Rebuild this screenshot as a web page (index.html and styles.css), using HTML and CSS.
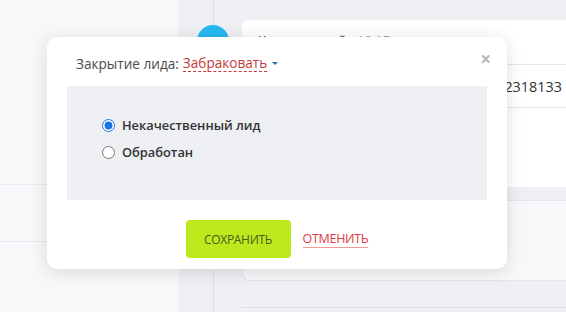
FILE: index.html
```html
<!DOCTYPE html>
<html lang="ru">
<head>
<meta charset="utf-8">
<title>Закрытие лида</title>
<link rel="stylesheet" href="styles.css">
</head>
<body>
<div class="page">
  <aside class="sidebar">
    <div class="side-block side-top"></div>
    <div class="side-block side-mid"></div>
    <div class="side-block"></div>
  </aside>
  <main class="feed">
    <div class="timeline">
      <div class="dot"></div>
    </div>
    <div class="cards">
      <div class="card">
        <div class="card-head"><span class="author">Комментарий</span><span class="time">10:15</span></div>
        <div class="card-row">+7 9052318133</div>
        <div class="card-rest"></div>
      </div>
      <div class="card2"></div>
    </div>
  </main>
</div>

<div class="modal">
  <div class="modal-head">
    <span class="modal-title">Закрытие лида:</span>
    <span class="status">Забраковать</span>
    <span class="caret"></span>
    <span class="close">&#215;</span>
  </div>
  <div class="options">
    <label class="opt"><input type="radio" name="r" checked> <span>Некачественный лид</span></label>
    <label class="opt"><input type="radio" name="r"> <span>Обработан</span></label>
  </div>
  <div class="actions">
    <button class="save">СОХРАНИТЬ</button>
    <a class="cancel" href="#">ОТМЕНИТЬ</a>
  </div>
</div>
</body>
</html>
```

FILE: styles.css
```css
* { box-sizing: border-box; }
html, body { margin: 0; padding: 0; }
body {
  width: 566px;
  height: 312px;
  overflow: hidden;
  font-family: "Open Sans", "Noto Sans", sans-serif;
  background: #eef0f3;
  position: relative;
}
.page {
  display: flex;
  height: 312px;
}
.sidebar {
  width: 178px;
  flex: none;
  background: #f7f8fa;
  box-shadow: 1px 0 3px rgba(0,0,0,0.04);
  display: flex;
  flex-direction: column;
}
.side-top { height: 185px; border-bottom: 1px solid #e6e9ed; }
.side-mid { height: 57px; border-bottom: 1px solid #e6e9ed; }
.feed {
  flex: 1;
  display: flex;
  background: #eef0f3;
}
.timeline {
  width: 64px;
  flex: none;
  background: linear-gradient(#dde1e6, #dde1e6) no-repeat 35px 0 / 1px 100%;
}
.dot {
  width: 32px;
  height: 32px;
  border-radius: 50%;
  background: #27b8ef;
  margin: 25px 0 0 19px;
}
.cards {
  flex: 1;
  display: flex;
  flex-direction: column;
  border-bottom: 1px solid #dde1e6;
  height: 308px;
}
.card {
  margin-top: 20px;
  height: 167px;
  background: #fff;
  border-radius: 7px 0 0 0;
  display: flex;
  flex-direction: column;
}
.card-head {
  height: 45px;
  padding: 11px 0 0 16px;
  font-size: 13px;
  color: #333;
  border-bottom: 1px solid #e3e6ea;
  display: flex;
}
.card-head .author { width: 99px; }
.card-head .time { color: #999; }
.card-row {
  height: 43px;
  border-bottom: 1px solid #e3e6ea;
  display: flex;
  align-items: center;
  justify-content: flex-end;
  padding-right: 4px;
  font-size: 14.4px;
  color: #333;
}
.card2 {
  margin-top: 13px;
  height: 81px;
  background: #f7f8fa;
  border: 1px solid #e3e6ea;
  border-right: none;
  border-radius: 0 0 0 8px;
}

.modal {
  position: absolute;
  left: 47px;
  top: 37px;
  width: 460px;
  height: 232px;
  background: #fff;
  border-radius: 10px;
  box-shadow: 0 3px 18px rgba(0,0,0,0.13);
  padding: 0 20px;
}
.modal-head {
  height: 49px;
  display: flex;
  align-items: center;
  padding: 4px 0 0 9px;
  font-size: 13.6px;
  color: #4a4a4a;
  position: relative;
}
.modal-title { margin-right: 4px; }
.status {
  color: #c6393a;
  border-bottom: 1px dashed #c6393a;
  line-height: 16px;
}
.caret {
  width: 0;
  height: 0;
  border-left: 3px solid transparent;
  border-right: 3px solid transparent;
  border-top: 3px solid #2f6aa3;
  margin-left: 5px;
}
.close {
  position: absolute;
  right: -4px;
  top: 13px;
  font-size: 19px;
  font-weight: bold;
  color: #b8b8b8;
  line-height: 1;
}
.options {
  height: 114px;
  background: #eef0f3;
  padding: 29px 0 0 35px;
  display: flex;
  flex-direction: column;
  gap: 7px;
}
.opt {
  display: flex;
  align-items: center;
  font-family: "Open Sans", sans-serif;
  font-weight: 600;
  font-size: 12.8px;
  color: #333;
  height: 20px;
}
.opt input {
  margin: 0 7px 0 0;
  width: 13px;
  height: 13px;
  accent-color: #1a73e8;
}
.actions {
  display: flex;
  justify-content: center;
  align-items: center;
  gap: 12px;
  margin-top: 20px;
}
.save {
  width: 105px;
  height: 38px;
  border: none;
  border-radius: 4px;
  background: #bcea1d;
  color: #4a5b1c;
  font-family: "Open Sans", sans-serif;
  font-size: 12px;
  letter-spacing: -0.3px;
}
.cancel {
  color: #e0393e;
  font-size: 12.5px;
  letter-spacing: -0.3px;
  text-decoration: none;
  border-bottom: 1px solid #f09a9a;
  line-height: 16px;
}
```
